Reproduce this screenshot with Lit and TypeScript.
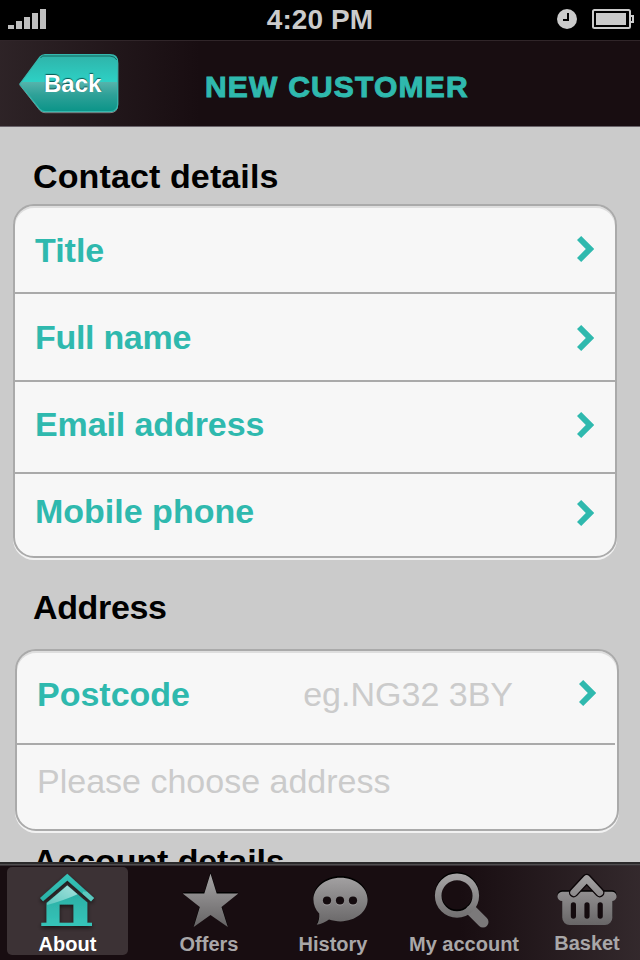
import { LitElement, html, css, svg } from "lit";
import { customElement } from "lit/decorators.js";

const chevron = html`<svg class="chev" viewBox="0 0 17 26" width="17" height="26">
  <path d="M4.2 0 17.2 13 4.2 26 0 22 8.8 13 0 4Z" fill="#2fb9ae"/></svg>`;

const greyFill = (id: string) => svg`<defs>
  <linearGradient id=${id} x1="0" y1="872" x2="0" y2="928" gradientUnits="userSpaceOnUse">
    <stop offset="0" stop-color="#a9a7a8"/><stop offset="1" stop-color="#646263"/>
  </linearGradient></defs>`;

const home = html`<svg class="glyph" viewBox="34 868 68 64" width="68" height="64">
  <defs>
    <linearGradient id="teal" x1="0" y1="0" x2="0" y2="1">
      <stop offset="0" stop-color="#35c4b9"/><stop offset="1" stop-color="#2ab0a6"/></linearGradient>
    <linearGradient id="body" x1="0" y1="0" x2="0" y2="1">
      <stop offset="0" stop-color="#28aaa0"/><stop offset="1" stop-color="#36c4b9"/></linearGradient>
    <linearGradient id="shine" x1="1" y1="0" x2="0" y2="1">
      <stop offset="0" stop-color="#a5e2dd"/><stop offset="1" stop-color="#5cc8bf"/></linearGradient>
    <filter id="soft" x="-20%" y="-20%" width="140%" height="150%">
      <feDropShadow dx="0" dy="2" stdDeviation="2" flood-color="#000" flood-opacity="0.6"/></filter>
  </defs>
  <g filter="url(#soft)">
    <path d="M67.3 873.8 94 898 91 901.2 67.3 880.5 43 901.3 40 898Z" fill="url(#teal)"/>
    <path d="M67.3 885.5 87.3 902.5V922.7H92V926H41.3V922.7H46.5V903Z M59.5 904.5V922.7H73.5V904.5Z" fill="url(#body)" fill-rule="evenodd"/>
    <path d="M67.3 885.5 77.5 894.2Q65 900 47 905V903Z" fill="url(#shine)"/>
    <path d="M83 891.5 87 891.7 94 898 91 901.2 82.5 893.8Z" fill="#5cc8bf"/>
  </g></svg>`;

const starPath = "M210.5 873.5 216.7 893.5H238.3L221.5 907 227.8 927 210.5 915 193.7 927 199.8 907 182.7 893.5H204.3Z";
const star = html`<svg class="glyph" viewBox="175 868 68 64" width="68" height="64">${greyFill("g1")}
  <path d=${starPath} fill="#000" transform="translate(0 -1.6)"/>
  <path d=${starPath} fill="url(#g1)"/></svg>`;

const bubblePath = "M340.5 877.7C355.5 877.7 367.6 887.5 367.6 899.6S355.5 921.4 340.5 921.4C336.5 921.4 332.5 920.8 329 919.6 325.5 922 321.5 924 316.8 924.8 318.8 921.5 319.5 918 319.2 913.6 315.5 909.8 313.4 904.8 313.4 899.6 313.4 887.5 325.5 877.7 340.5 877.7Z";
const bubble = html`<svg class="glyph" viewBox="299 868 68 64" width="68" height="64">${greyFill("g2")}
  <path d=${bubblePath} fill="#000" transform="translate(0 -1.6)"/>
  <path d=${bubblePath} fill="url(#g2)"/>
  ${[327, 340, 353].map((x) => svg`<circle cx=${x} cy="901.4" r="4" fill="#a09e9f"/><circle cx=${x} cy="900.5" r="4.1" fill="#140b0e"/>`)}</svg>`;

const lens = html`<svg class="glyph" viewBox="430 868 68 64" width="68" height="64">${greyFill("g3")}
  <circle cx="457" cy="894.1" r="18.8" stroke-width="6.6" fill="none" stroke="#000"/>
  <path d="M471.5 910.5 483 922" stroke-width="11" stroke-linecap="round" fill="none" stroke="#7b797a"/>
  <circle cx="457" cy="895.7" r="18.8" stroke-width="6.6" fill="none" stroke="url(#g3)"/></svg>`;

const basketPath = "M562 891.7H611.5A4.6 4.6 0 0 1 612.4 901V917.5A7.5 7.5 0 0 1 605 925H570A7.5 7.5 0 0 1 562.2 917.5V901A4.6 4.6 0 0 1 562 891.7Z";
const basket = html`<svg class="glyph" viewBox="553 868 68 64" width="68" height="64">${greyFill("g4")}
  <path d=${basketPath} fill="#000" transform="translate(0 -1.4)"/>
  <path d=${basketPath} fill="url(#g4)"/>
  <g fill="none" stroke-linecap="round" stroke-linejoin="round">
    <path d="M573.7 892.6 586.7 878.6 599.7 892.6" stroke="#0b0507" stroke-width="9.6"/>
    <path d="M573.7 892.6 586.7 878.6 599.7 892.6" stroke="url(#g4)" stroke-width="6.8"/></g>
  ${[570.8, 584.4, 597.6].map((x) => svg`<rect x=${x} y="902.3" width="5.2" height="16.4" rx="2.6" fill="#140b0e"/>`)}</svg>`;

@customElement("app-root")
export class AppRoot extends LitElement {
  static styles = css`
    :host { display: flex; flex-direction: column; width: 640px; height: 960px; overflow: hidden;
      background: #cbcbcb; font-family: "Liberation Sans", Arial, sans-serif; font-weight: 700; }
    * { box-sizing: border-box; }
    svg { display: block; flex: none; }
    .status { height: 40px; flex: none; background: #000; color: #cbcbcb; display: grid;
      grid-template-columns: 1fr auto 1fr; align-items: start; }
    .status .signal { margin: 9px 0 0 8px; }
    .time { font-size: 28px; line-height: 32px; padding-top: 4px; letter-spacing: 0.1px; }
    .right { display: flex; justify-content: flex-end; gap: 15px; padding: 9px 6px 0 0; }
    .nav { height: 87px; flex: none; display: flex; border-top: 1px solid #302529; border-bottom: 1px solid #69636a;
      background: linear-gradient(90deg, rgba(60,50,53,.6), rgba(24,13,17,0) 200px), #180d11; }
    .back { display: grid; margin: 12px 0 0 18px; width: 102px; height: 62px; }
    .back > * { grid-area: 1 / 1; }
    .back span { color: #fff; font-size: 24px; line-height: 28px; padding: 17px 0 0 26px; position: relative;
      text-shadow: 0 -1.5px 1px rgba(0,60,55,.8); }
    .heading { margin: 0 0 0 85px; padding-top: 28px; font-size: 30px; line-height: 36px; color: #2fb9ae;
      letter-spacing: 1.2px; -webkit-text-stroke: 1px #2fb9ae; white-space: nowrap; }
    .body { flex: 1; min-height: 0; overflow: hidden; display: flex; flex-direction: column; }
    .body h2 { margin: 0; padding-left: 33px; flex: none; font-size: 34px; line-height: 40px; color: #000; }
    .body .h-contact { height: 77px; padding-top: 29px; letter-spacing: 0.12px; }
    .body .h-address { height: 91px; padding-top: 29px; letter-spacing: -0.35px; }
    .body .h-account { height: 60px; padding-top: 10px; letter-spacing: -0.1px; }
    .card { flex: none; width: 604px; margin-left: 13px; border: 2px solid #aaa; border-radius: 21px; background: #f7f7f7;
      box-shadow: inset 0 2px 0 #dedede, 0 2px 0 #f2f2f2; color: #2fb9ae; font-size: 34px; line-height: 40px; }
    .card.second { margin-left: 15px; }
    .row { display: flex; padding: 24px 21px 0 20px; height: 88px; border-bottom: 2px solid #aaa; }
    .row .name { flex: 1; white-space: nowrap; }
    .row .chev { margin-top: 6px; }
    .row.full { padding-top: 23px; letter-spacing: -0.3px; }
    .row.email { padding-top: 22px; height: 92px; letter-spacing: -0.1px; }
    .row.full .chev, .row.email .chev { margin-top: 8px; }
    .row.mobile { padding-top: 17px; height: 82px; border: 0; }
    .row.mobile .chev { margin-top: 9px; }
    .row.post { padding-top: 23px; height: 94px; margin-right: 2px; padding-right: 19px; }
    .row.choose { padding-top: 16px; height: 84px; border: 0; }
    .hint { font-weight: 400; color: #cbcbcb; white-space: nowrap; }
    .post .hint { margin-right: 66px; }
    .tabs { height: 98px; flex: none; display: grid; grid-template-columns: 134px 150px 98px 164px 82px;
      border-top: 2px solid #2b2a2b; box-shadow: inset 0 1px 0 #4f4c4e, inset 0 2px 0 #363034;
      background: linear-gradient(270deg, rgba(66,56,59,.65), rgba(24,13,17,0) 180px), #180d11; }
    .tab { display: flex; flex-direction: column; align-items: center; color: #a9a7a8; font-size: 20px;
      line-height: 24px; padding-top: 4px; white-space: nowrap; }
    .tab .glyph { overflow: visible; }
    .tab.on { color: #fff; background: #3c3235; border-radius: 5px; margin: 3px 6px 5px 7px; padding-top: 1px; height: 88px; }
    .tab.last { margin-top: -1px; }
    .tab.last .glyph { margin-top: 1px; margin-bottom: -1px; }
  `;

  render() {
    return html`
      <div class="status">
        <svg class="signal" width="38" height="20" viewBox="0 0 38 20">
          ${[4, 8, 12, 16, 20].map((h, i) => svg`<rect x=${i * 8} y=${20 - h} width="6" height=${h} fill="#bfbfbf"/>`)}
        </svg>
        <div class="time">4:20 PM</div>
        <div class="right">
          <svg width="20" height="20" viewBox="0 0 20 20"><circle cx="10" cy="10" r="10" fill="#cbcbcb"/>
            <path d="M11 4V11H6" fill="none" stroke="#000" stroke-width="2"/></svg>
          <svg width="42" height="20" viewBox="0 0 42 20" fill="none" stroke="#cbcbcb" stroke-width="2">
            <rect x="1" y="1" width="37" height="18" rx="1.5"/>
            <rect x="4" y="4" width="30" height="12" fill="#cbcbcb" stroke="none"/>
            <path d="M38 7H41V13H38"/></svg>
        </div>
      </div>
      <div class="nav">
        <div class="back">
          <svg width="102" height="62" viewBox="18 53 102 62">
            <defs><linearGradient id="btn" x1="0" y1="0" x2="0" y2="1">
              <stop offset="0" stop-color="#2fb3a9"/><stop offset="0.47" stop-color="#2dd0c4"/>
              <stop offset="0.48" stop-color="#56b3ab"/><stop offset="0.7" stop-color="#2fa198"/>
              <stop offset="1" stop-color="#0a9488"/></linearGradient></defs>
            <path d="M19.8 84 40 57Q42 54.7 45 54.7H110Q117.7 54.7 117.7 62.5V104Q117.7 111.7 110 111.7H45Q42 111.7 40 109.5Z" transform="translate(0 1)" fill="none" stroke="#8b8587" stroke-width="1"/>
            <path d="M19.8 84 40 57Q42 54.7 45 54.7H110Q117.7 54.7 117.7 62.5V104Q117.7 111.7 110 111.7H45Q42 111.7 40 109.5Z" fill="url(#btn)" stroke="#35b8ae" stroke-width="1.2"/>
            <path d="M40.5 58 42.5 56H110Q115 56.3 116.8 60" fill="none" stroke="#15665f" stroke-width="1"/>
          </svg>
          <span>Back</span>
        </div>
        <div class="heading">NEW CUSTOMER</div>
      </div>
      <div class="body">
        <h2 class="h-contact">Contact details</h2>
        <div class="card">
          <div class="row"><span class="name">Title</span>${chevron}</div>
          <div class="row full"><span class="name">Full name</span>${chevron}</div>
          <div class="row email"><span class="name">Email address</span>${chevron}</div>
          <div class="row mobile"><span class="name">Mobile phone</span>${chevron}</div>
        </div>
        <h2 class="h-address">Address</h2>
        <div class="card second">
          <div class="row post"><span class="name">Postcode</span><span class="hint">eg.NG32 3BY</span>${chevron}</div>
          <div class="row choose"><span class="hint">Please choose address</span></div>
        </div>
        <h2 class="h-account">Account details</h2>
      </div>
      <div class="tabs">
        <div class="tab on">${home}<span>About</span></div>
        <div class="tab">${star}<span>Offers</span></div>
        <div class="tab">${bubble}<span>History</span></div>
        <div class="tab">${lens}<span>My account</span></div>
        <div class="tab last">${basket}<span>Basket</span></div>
      </div>`;
  }
}
